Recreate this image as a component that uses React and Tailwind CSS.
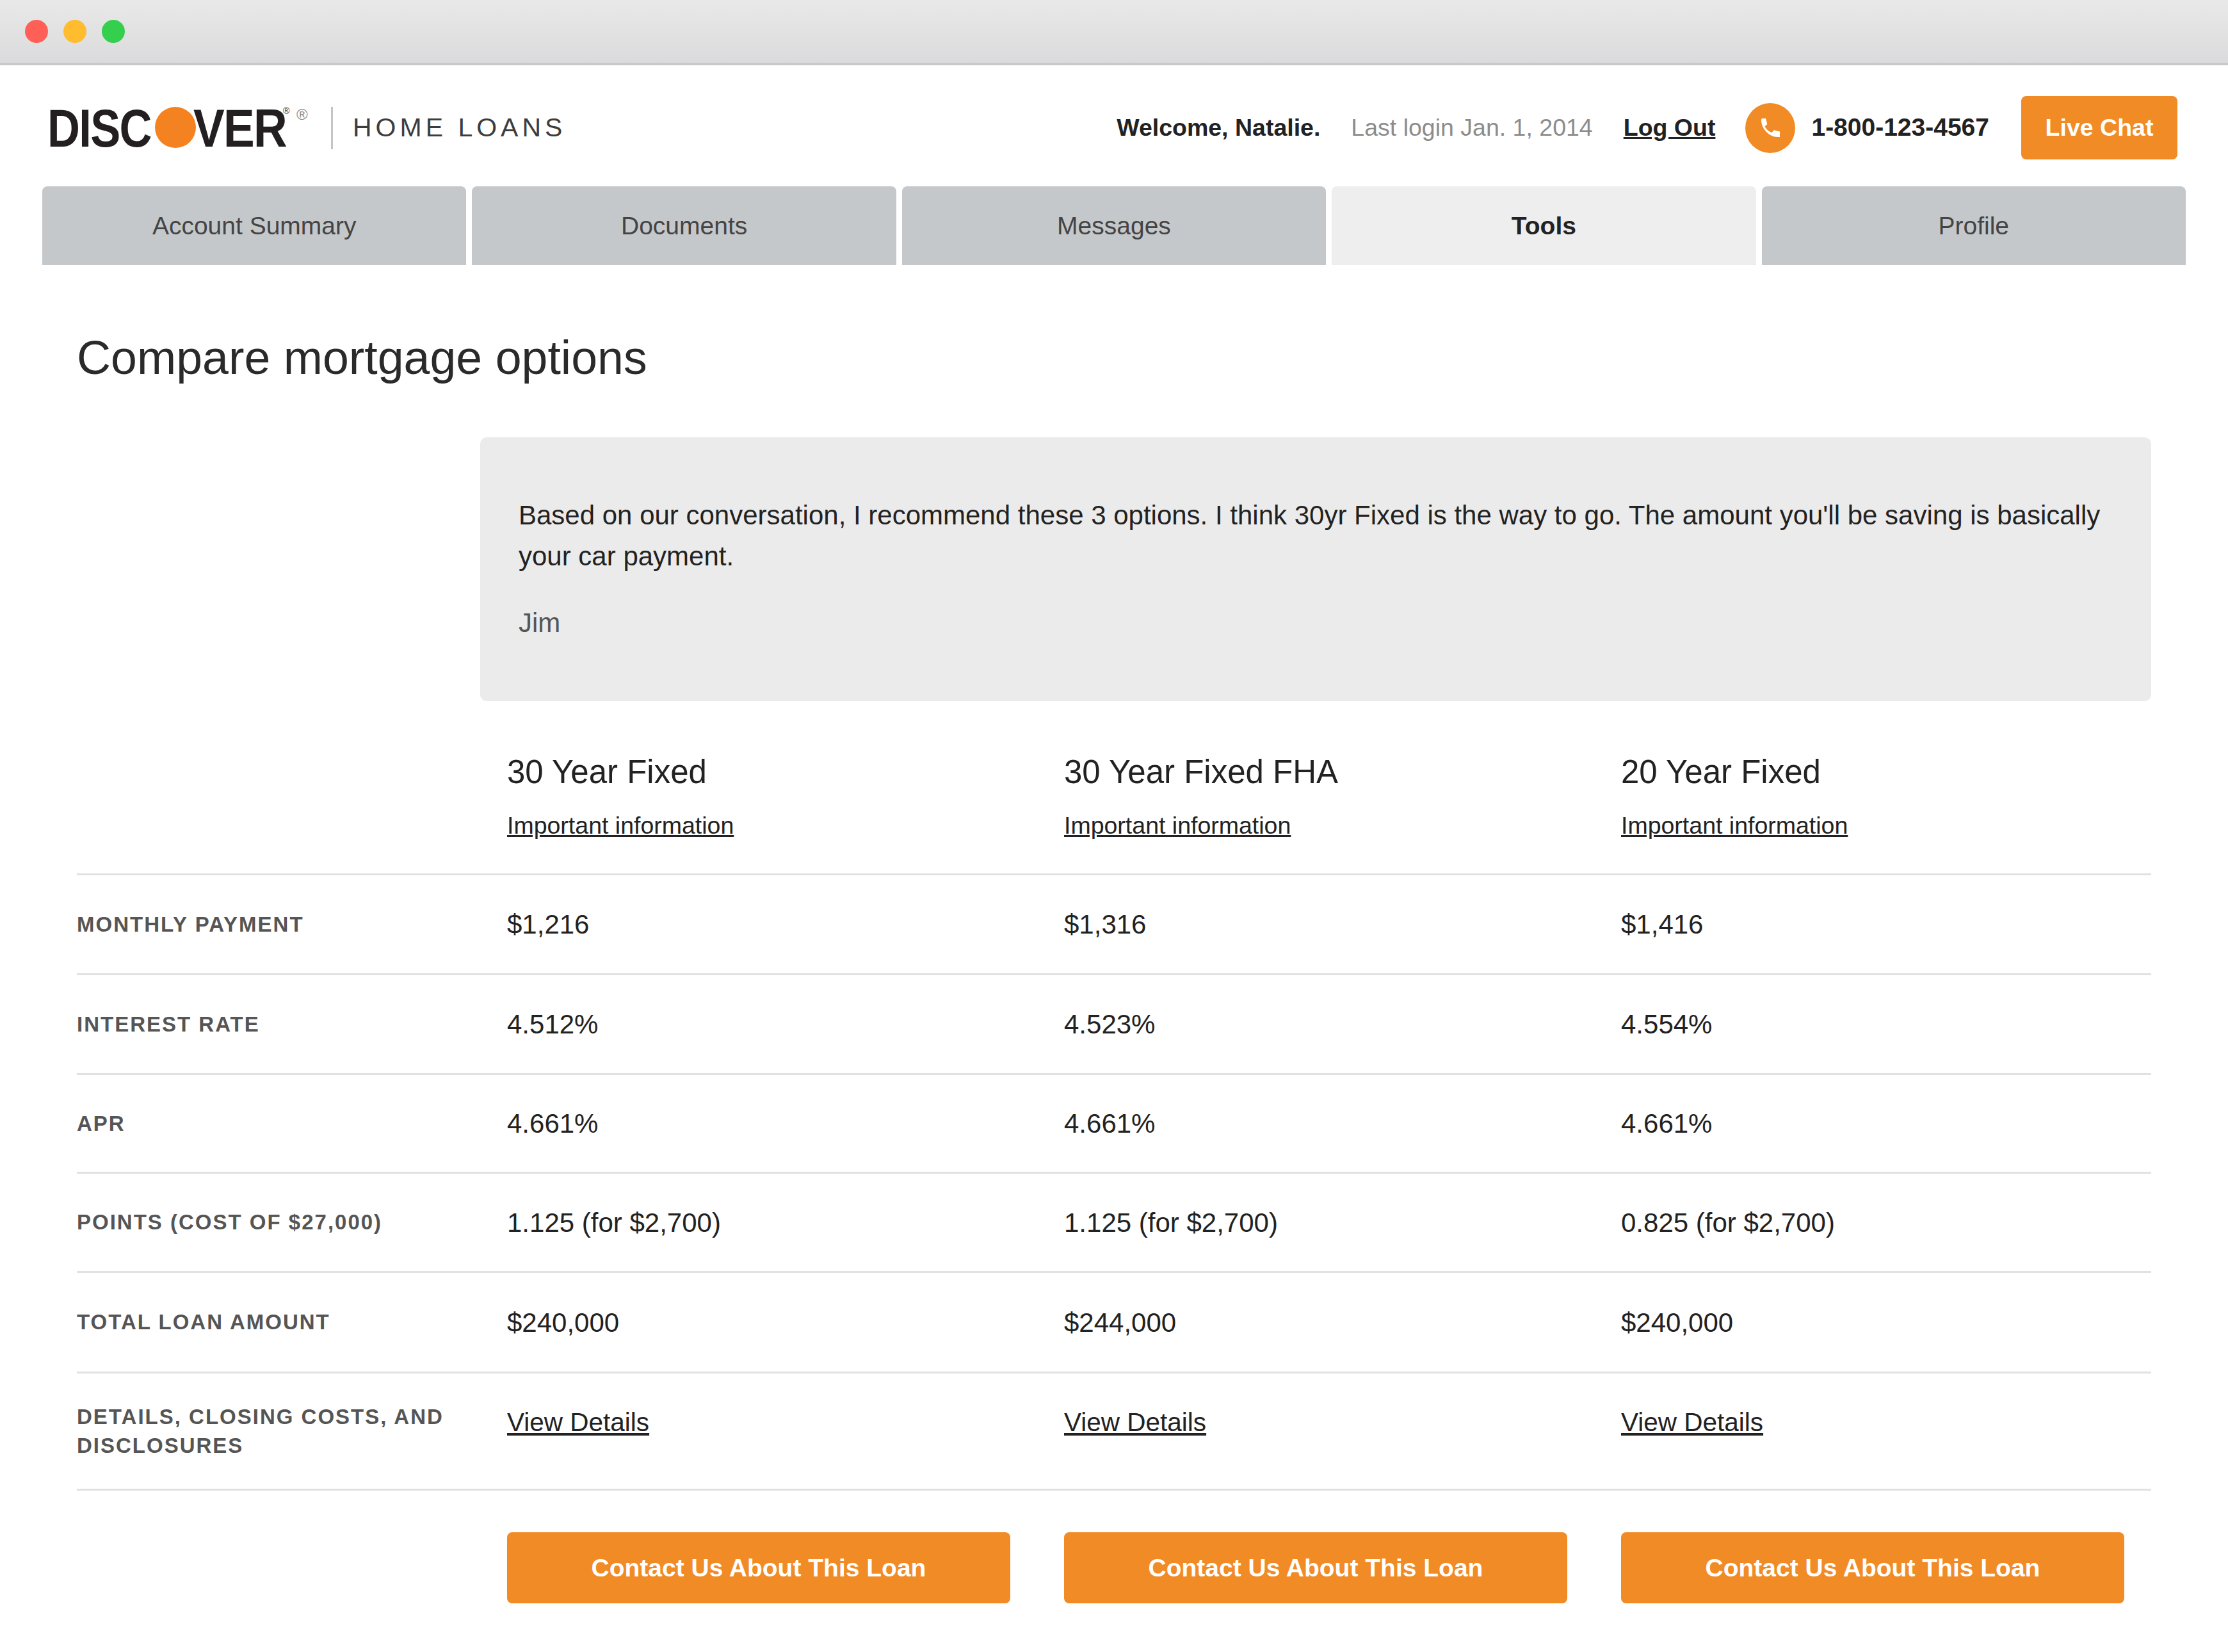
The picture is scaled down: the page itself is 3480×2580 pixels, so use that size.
import React from 'react';

const tabs = ['Account Summary', 'Documents', 'Messages', 'Tools', 'Profile'];

const loans = [
    { name: '30 Year Fixed', payment: '$1,216', rate: '4.512%', apr: '4.661%', points: '1.125 (for $2,700)', total: '$240,000' },
    { name: '30 Year Fixed FHA', payment: '$1,316', rate: '4.523%', apr: '4.661%', points: '1.125 (for $2,700)', total: '$244,000' },
    { name: '20 Year Fixed', payment: '$1,416', rate: '4.554%', apr: '4.661%', points: '0.825 (for $2,700)', total: '$240,000' },
];

const rows = [
    { label: 'MONTHLY PAYMENT', key: 'payment', height: 'h-[156px]' },
    { label: 'INTEREST RATE', key: 'rate', height: 'h-[156px]' },
    { label: 'APR', key: 'apr', height: 'h-[154px]' },
    { label: 'POINTS (COST OF $27,000)', key: 'points', height: 'h-[155px]' },
    { label: 'TOTAL LOAN AMOUNT', key: 'total', height: 'h-[157px]' },
];

const gridCols = 'grid grid-cols-[672px_870px_870px_1fr]';

const PhoneIcon = () => (
    <svg viewBox="0 0 29 29" className="h-[29px] w-[29px] fill-white">
        <path d="M0 2C0 .8.8 0 2 0h5l2.300 9-3.800 3.500c2.200 4.300 6 8 11 9.500l3.500-3.800 9 2.300V29H26C12 29 0 16 0 2z" />
    </svg>
);

const Logo = () => (
    <div className="relative h-[66px] w-[404px] font-bold text-[#231f20] text-[83px] leading-[66px] tracking-[-2px] whitespace-nowrap">
        <span className="absolute left-[-4px] top-[1px] origin-left scale-x-[0.85]">DISC</span>
        <span className="absolute left-[164px] top-[0px] h-[64px] w-[64px] rounded-full bg-[#f58220]"></span>
        <span className="absolute left-[224px] top-[1px] origin-left scale-x-[0.88]">VER</span>
        <span className="absolute left-[364px] top-[-4px] text-[14px] leading-[20px] font-normal tracking-normal">®</span>
        <span className="absolute left-[385px] top-[-2px] text-[24px] leading-[28px] font-normal tracking-normal text-[#8a8a8a]">®</span>
    </div>
);

const App = () => {
    return (
        <div className="min-h-[2580px] bg-white font-['Liberation_Sans',Arial,sans-serif] text-[42px] text-[#222222]">
            {/* window chrome */}
            <div className="flex h-[102px] items-center gap-[24px] border-b-[4px] border-[#c8c8ca] bg-gradient-to-b from-[#e9e9e9] to-[#dbdbdd] pl-[39px]">
                <span className="h-[36px] w-[36px] rounded-full bg-[#ff5f57]"></span>
                <span className="h-[36px] w-[36px] rounded-full bg-[#febc2e]"></span>
                <span className="h-[36px] w-[36px] rounded-full bg-[#33cf4d]"></span>
            </div>

            {/* header */}
            <div className="flex h-[189px] items-center pt-[6px] pl-[78px] pr-[79px]">
                <Logo />
                <div className="ml-[35px] h-[66px] w-[3px] bg-[#c4c4c4]"></div>
                <div className="ml-[31px] text-[41px] leading-none tracking-[6px] text-[#3d3d3d]">HOME LOANS</div>
                <div className="ml-auto flex items-center">
                    <span className="font-bold text-[#222222] text-[37.500px]">Welcome, Natalie.</span>
                    <span className="ml-[48px] text-[37.500px] text-[#8c8c8c]">Last login Jan. 1, 2014</span>
                    <a className="ml-[48px] font-bold text-[37.500px] underline">Log Out</a>
                    <span className="ml-[47px] flex h-[78px] w-[78px] items-center justify-center rounded-full bg-[#f18b25]">
                        <PhoneIcon />
                    </span>
                    <span className="ml-[25px] font-bold text-[39px]">1-800-123-4567</span>
                    <button className="ml-[50px] flex h-[99px] w-[244px] items-center justify-center rounded-[8px] bg-[#f18b25] font-bold text-white text-[37.500px]">Live Chat</button>
                </div>
            </div>

            {/* tabs */}
            <div className="mx-[66px] grid grid-cols-5 gap-[9px] text-[39px]">
                {tabs.map(tab => (
                    <div
                        key={tab}
                        className={`flex h-[123px] items-center justify-center rounded-t-[8px] pt-[2px] ${tab === 'Tools' ? 'bg-[#eeeeee] font-bold text-[#222222]' : 'bg-[#c4c8cb] text-[#444444]'}`}
                    >
                        {tab}
                    </div>
                ))}
            </div>

            <div className="px-[120px]">
                <h1 className="mt-[95px] text-[73.500px] leading-[100px] text-[#2a2a2a]">Compare mortgage options</h1>

                {/* message from loan officer */}
                <div className="ml-[630px] mt-[74px] h-[412px] rounded-[10px] bg-[#ebebeb] pl-[60px] pr-[60px] pt-[90px]">
                    <p className="leading-[64px] text-[#222222]">Based on our conversation, I recommend these 3 options. I think 30yr Fixed is the way to go. The amount you'll be saving is basically your car payment.</p>
                    <p className="mt-[40px] leading-[64px] text-[#555555]">Jim</p>
                </div>

                {/* compare table */}
                <div className={`${gridCols} h-[272px] border-b-[3px] border-[#e1e1e1] pt-[79px]`}>
                    <div></div>
                    {loans.map(loan => (
                        <div key={loan.name}>
                            <div className="text-[51px] leading-[64px]">{loan.name}</div>
                            <a className="mt-[26px] block text-[37.500px] leading-[50px] underline">Important information</a>
                        </div>
                    ))}
                </div>

                {rows.map(row => (
                    <div key={row.key} className={`${gridCols} ${row.height} items-center border-b-[3px] border-[#e1e1e1]`}>
                        <div className="font-bold text-[33px] tracking-[2px] text-[#555555]">{row.label}</div>
                        {loans.map(loan => (
                            <div key={loan.name}>{loan[row.key]}</div>
                        ))}
                    </div>
                ))}

                <div className={`${gridCols} h-[183px] items-center border-b-[3px] border-[#e1e1e1]`}>
                    <div className="font-bold text-[33px] leading-[45px] tracking-[2px] text-[#555555]">DETAILS, CLOSING COSTS, AND<br />DISCLOSURES</div>
                    {loans.map(loan => (
                        <a key={loan.name} className="mt-[46px] self-start text-[40.500px] underline">View Details</a>
                    ))}
                </div>

                <div className={`${gridCols} mt-[65px]`}>
                    <div></div>
                    {loans.map(loan => (
                        <button key={loan.name} className="flex h-[111px] w-[786px] items-center justify-center rounded-[8px] bg-[#f18b25] pt-[2px] font-bold text-[39px] text-white">Contact Us About This Loan</button>
                    ))}
                </div>
            </div>
        </div>
    );
};

export default App;
